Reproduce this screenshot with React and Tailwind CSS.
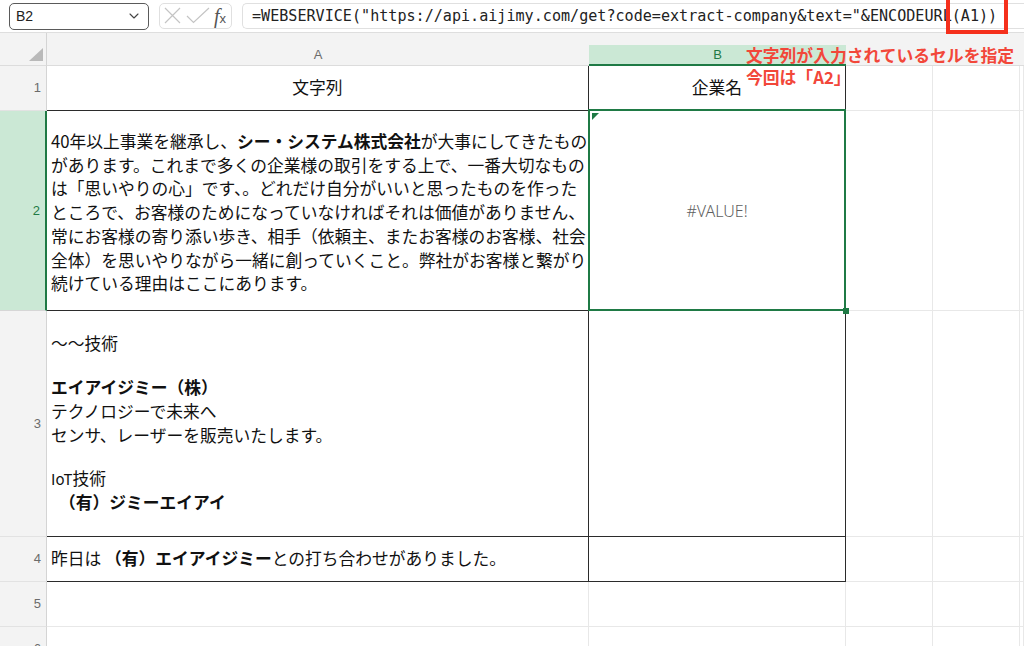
import { ChevronDown } from 'lucide-react'

const jp = "font-['Noto_Sans_CJK_JP','Noto_Sans',sans-serif]"
const ui = "font-['Liberation_Sans','Noto_Sans',sans-serif]"

function RowHead({ n, active }) {
  return (
    <div
      className={
        active
          ? `flex items-center justify-end pr-[5px] bg-[#cbe8d5] border-r-2 border-r-[#1f7a45] border-b border-b-[#d6d6d6] text-[13px] text-[#1f7a45] ${ui}`
          : `flex items-center justify-end pr-[5px] bg-[#f3f3f3] border-r border-r-[#d4d4d4] border-b border-b-[#e2e2e2] text-[13px] text-[#6b6b6b] ${ui}`
      }
    >
      {n}
    </div>
  )
}

function Blank() {
  return <div className="border-r border-b border-[#e8e8e8]" />
}

export default function App() {
  return (
    <div className={`relative h-[646px] w-[1024px] overflow-hidden bg-white ${ui}`}>
      {/* formula bar */}
      <div className="flex h-[33px] items-center gap-[10px] border-b border-[#dedede] bg-white pl-[9px]">
        <div className="flex h-[27px] w-[140px] items-center justify-between rounded-[5px] border border-[#5a5a5a] px-[6px] text-[14px] text-[#222]">
          <span>B2</span>
          <ChevronDown size={16} strokeWidth={1.6} className="text-[#444]" />
        </div>
        <div className="flex h-[26px] w-[73px] items-center gap-[4px] rounded-[5px] border border-[#e0e0e0] pl-[4px]">
          <svg width="46" height="18" viewBox="0 0 46 18" fill="none" stroke="#c4c4c4" strokeWidth="1.2">
            <path d="M1 1 L16 16 M16 1 L1 16" />
            <path d="M23 9 L29.5 15.5 L45 1" />
          </svg>
          <span className="font-['Liberation_Serif',serif] text-[20px] italic text-[#555] leading-none">
            f<span className="text-[13px] not-italic font-['Liberation_Sans',sans-serif]">x</span>
          </span>
        </div>
        <div className="flex h-[26px] flex-1 items-center rounded-l-[5px] border border-r-0 border-[#e0e0e0] pl-[9px] font-['DejaVu_Sans_Mono',monospace] text-[15.1px] text-[#222] whitespace-nowrap">
          =WEBSERVICE("https://api.aijimy.com/get?code=extract-company&amp;text="&amp;ENCODEURL(A1))
        </div>
      </div>

      {/* sheet */}
      <div className="grid grid-cols-[47px_542px_257px_87px_87px_1fr] grid-rows-[33px_45px_200px_226px_45px_45px_45px]">
        {/* header row */}
        <div className="relative bg-[#f3f3f3] border-r border-r-[#d4d4d4] border-b border-b-[#dcdcdc]">
          <svg className="absolute bottom-[4px] right-[3px]" width="14" height="13" viewBox="0 0 14 13">
            <path d="M14 0 L14 13 L0 13 Z" fill="#b9b9b9" />
          </svg>
        </div>
        <div className="flex items-end bg-[#f3f3f3] border-b border-b-[#dcdcdc]">
          <div className="flex h-[21px] w-full items-center justify-center text-[13px] text-[#6b6b6b]">A</div>
        </div>
        <div className="flex items-end bg-[#f3f3f3]">
          <div className="flex h-[21px] w-full items-center justify-center bg-[#cbe8d5] border-b-2 border-b-[#1f7a45] text-[13px] text-[#1f7a45]">B</div>
        </div>
        <div className="bg-[#f3f3f3] border-b border-b-[#dcdcdc]" />
        <div className="bg-[#f3f3f3] border-b border-b-[#dcdcdc]" />
        <div className="bg-[#f3f3f3] border-b border-b-[#dcdcdc]" />

        {/* row 1 */}
        <RowHead n="1" />
        <div className={`flex items-center justify-center border-r border-b border-[#2b2b2b] text-[16.75px] text-[#111] ${jp}`}>文字列</div>
        <div className={`flex items-center justify-center border-r border-b border-[#2b2b2b] text-[16.75px] text-[#111] ${jp}`}>企業名</div>
        <Blank />
        <Blank />
        <Blank />

        {/* row 2 */}
        <RowHead n="2" active />
        <div className={`flex flex-col justify-center pt-[5px] pl-[4px] border-r border-b border-[#2b2b2b] text-[16.75px] leading-[23.7px] text-[#111] whitespace-nowrap ${jp}`}>
          <span>40年以上事業を継承し、<b>シー・システム株式会社</b>が大事にしてきたもの</span>
          <span>があります。これまで多くの企業様の取引をする上で、一番大切なもの</span>
          <span>は「思いやりの心」です、。どれだけ自分がいいと思ったものを作った</span>
          <span>ところで、お客様のためになっていなければそれは価値がありません、</span>
          <span>常にお客様の寄り添い歩き、相手（依頼主、またお客様のお客様、社会</span>
          <span>全体）を思いやりながら一緒に創っていくこと。弊社がお客様と繋がり</span>
          <span>続けている理由はここにあります。</span>
        </div>
        <div className="relative flex items-center justify-center border-r border-b border-[#2b2b2b]">
          <span className="font-['Noto_Sans',sans-serif] font-light text-[16px] text-[#5f5f5f]">#VALUE!</span>
          <div className="absolute -left-[1px] -top-[2px] -right-[1px] -bottom-[1px] border-2 border-[#1f7a45]" />
          <svg className="absolute left-[3px] top-[2px]" width="7" height="7" viewBox="0 0 7 7">
            <path d="M0 0 L7 0 L0 7 Z" fill="#1f7a45" />
          </svg>
          <div className="absolute -bottom-[4px] -right-[4px] h-[6px] w-[6px] bg-[#1f7a45]" />
        </div>
        <Blank />
        <Blank />
        <Blank />

        {/* row 3 */}
        <RowHead n="3" />
        <div className={`flex flex-col justify-center pl-[4px] border-r border-b border-[#2b2b2b] text-[16.75px] leading-[23.7px] text-[#111] whitespace-nowrap ${jp}`}>
          <span>〜〜技術</span>
          <span className="h-[20px]" />
          <span className="font-bold">エイアイジミー（株）</span>
          <span>テクノロジーで未来へ</span>
          <span>センサ、レーザーを販売いたします。</span>
          <span className="h-[20px]" />
          <span><span className="text-[15px]">IoT</span>技術</span>
          <span className="pl-[8px] font-bold">（有）ジミーエイアイ</span>
        </div>
        <div className="border-r border-b border-[#2b2b2b]" />
        <Blank />
        <Blank />
        <Blank />

        {/* row 4 */}
        <RowHead n="4" />
        <div className={`flex items-center pl-[4px] border-r border-b border-[#2b2b2b] text-[16.75px] text-[#111] whitespace-nowrap ${jp}`}>
          <span>昨日は <b>（有）エイアイジミー</b>との打ち合わせがありました。</span>
        </div>
        <div className="border-r border-b border-[#2b2b2b]" />
        <Blank />
        <Blank />
        <Blank />

        {/* row 5 */}
        <RowHead n="5" />
        <Blank />
        <Blank />
        <Blank />
        <Blank />
        <Blank />

        {/* row 6 */}
        <RowHead n="6" />
        <Blank />
        <Blank />
        <Blank />
        <Blank />
        <Blank />
      </div>

      {/* annotation */}
      <div className={`absolute left-[746px] top-[44px] text-[16.8px] font-bold leading-[22px] text-[#f2473a] ${jp}`}>
        <div>文字列が入力されているセルを指定</div>
        <div>今回は「A2」</div>
      </div>
      <div className="absolute left-[946px] top-[-4px] h-[38px] w-[62px] border-4 border-[#f5301c]" />
    </div>
  )
}
